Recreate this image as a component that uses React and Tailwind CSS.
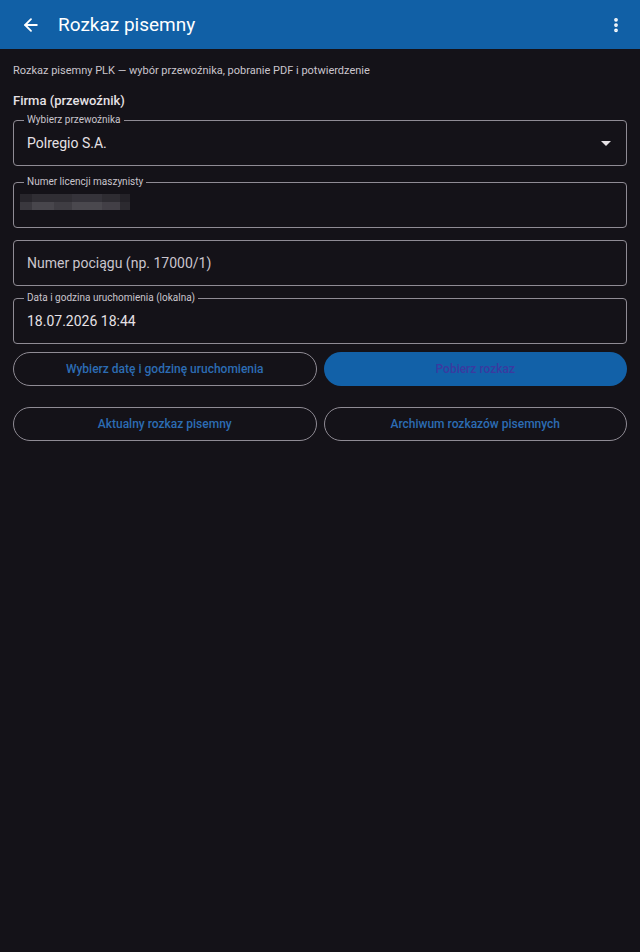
import { ArrowLeft, EllipsisVertical } from "lucide-react";

function OutlinedField({ label, children, className = "" }) {
  return (
    <div className={`relative h-[46px] rounded-[4px] border border-[#8f8b94] flex items-center px-[13px] ${className}`}>
      {label && (
        <span className="absolute left-[10px] -top-[8px] bg-[#141218] px-[3px] text-[10px] leading-[14px] text-[#cac5cd]">
          {label}
        </span>
      )}
      {children}
    </div>
  );
}

function Button({ children, filled }) {
  return filled ? (
    <button className="h-[34px] rounded-full bg-[#1261a8] text-[12px] font-medium text-[#3a3aa0]">
      {children}
    </button>
  ) : (
    <button className="h-[34px] rounded-full border border-[#8f8b94] text-[12px] font-medium text-[#2c6cb3]">
      {children}
    </button>
  );
}

export default function App() {
  return (
    <div className="min-h-[952px] bg-[#141218] font-['Roboto',sans-serif] text-[#e6e1e5]">
      <header className="h-[49px] bg-[#1160a6] flex items-center px-[20px] text-white">
        <ArrowLeft size={20} strokeWidth={2.2} className="ml-[1px]" />
        <h1 className="ml-[17px] text-[19px] leading-none">Rozkaz pisemny</h1>
        <EllipsisVertical size={18} strokeWidth={3} className="ml-auto -mr-[5px]" />
      </header>

      <main className="px-[13px]">
        <p className="mt-[15px] text-[11px] leading-[14px] text-[#cac5cd]">
          Rozkaz pisemny PLK — wybór przewoźnika, pobranie PDF i potwierdzenie
        </p>
        <h2 className="mt-[15px] text-[13px] leading-[16px] font-medium">Firma (przewoźnik)</h2>

        <OutlinedField label="Wybierz przewoźnika" className="mt-[11px]">
          <span className="text-[14px]">Polregio S.A.</span>
          <svg width="10" height="5" viewBox="0 0 10 5" className="ml-auto mr-[2px]">
            <path d="M0 0 L10 0 L5 5 Z" fill="#e6e1e5" />
          </svg>
        </OutlinedField>

        <OutlinedField label="Numer licencji maszynisty" className="mt-[16px]">
          <div className="flex flex-col -mt-[6px] -ml-[7px] blur-[0.6px]">
            <div className="flex">
              <div className="h-[8px] w-[12px] bg-[#28262c]" />
              <div className="h-[8px] w-[40px] bg-[#302e34]" />
              <div className="h-[8px] w-[30px] bg-[#35333a]" />
              <div className="h-[8px] w-[18px] bg-[#2e2c32]" />
              <div className="h-[8px] w-[10px] bg-[#242228]" />
            </div>
            <div className="flex">
              <div className="h-[8px] w-[12px] bg-[#3a383e]" />
              <div className="h-[8px] w-[22px] bg-[#48464c]" />
              <div className="h-[8px] w-[18px] bg-[#3f3d43]" />
              <div className="h-[8px] w-[30px] bg-[#4a484e]" />
              <div className="h-[8px] w-[18px] bg-[#423f46]" />
              <div className="h-[8px] w-[10px] bg-[#2c2a30]" />
            </div>
          </div>
        </OutlinedField>

        <OutlinedField className="mt-[12px]">
          <span className="text-[14px] text-[#cac5cd]">Numer pociągu (np. 17000/1)</span>
        </OutlinedField>

        <OutlinedField label="Data i godzina uruchomienia (lokalna)" className="mt-[12px]">
          <span className="text-[14px]">18.07.2026 18:44</span>
        </OutlinedField>

        <div className="mt-[8px] grid grid-cols-2 gap-[7px]">
          <Button>Wybierz datę i godzinę uruchomienia</Button>
          <Button filled>Pobierz rozkaz</Button>
        </div>

        <div className="mt-[21px] grid grid-cols-2 gap-[7px]">
          <Button>Aktualny rozkaz pisemny</Button>
          <Button>Archiwum rozkazów pisemnych</Button>
        </div>
      </main>
    </div>
  );
}
